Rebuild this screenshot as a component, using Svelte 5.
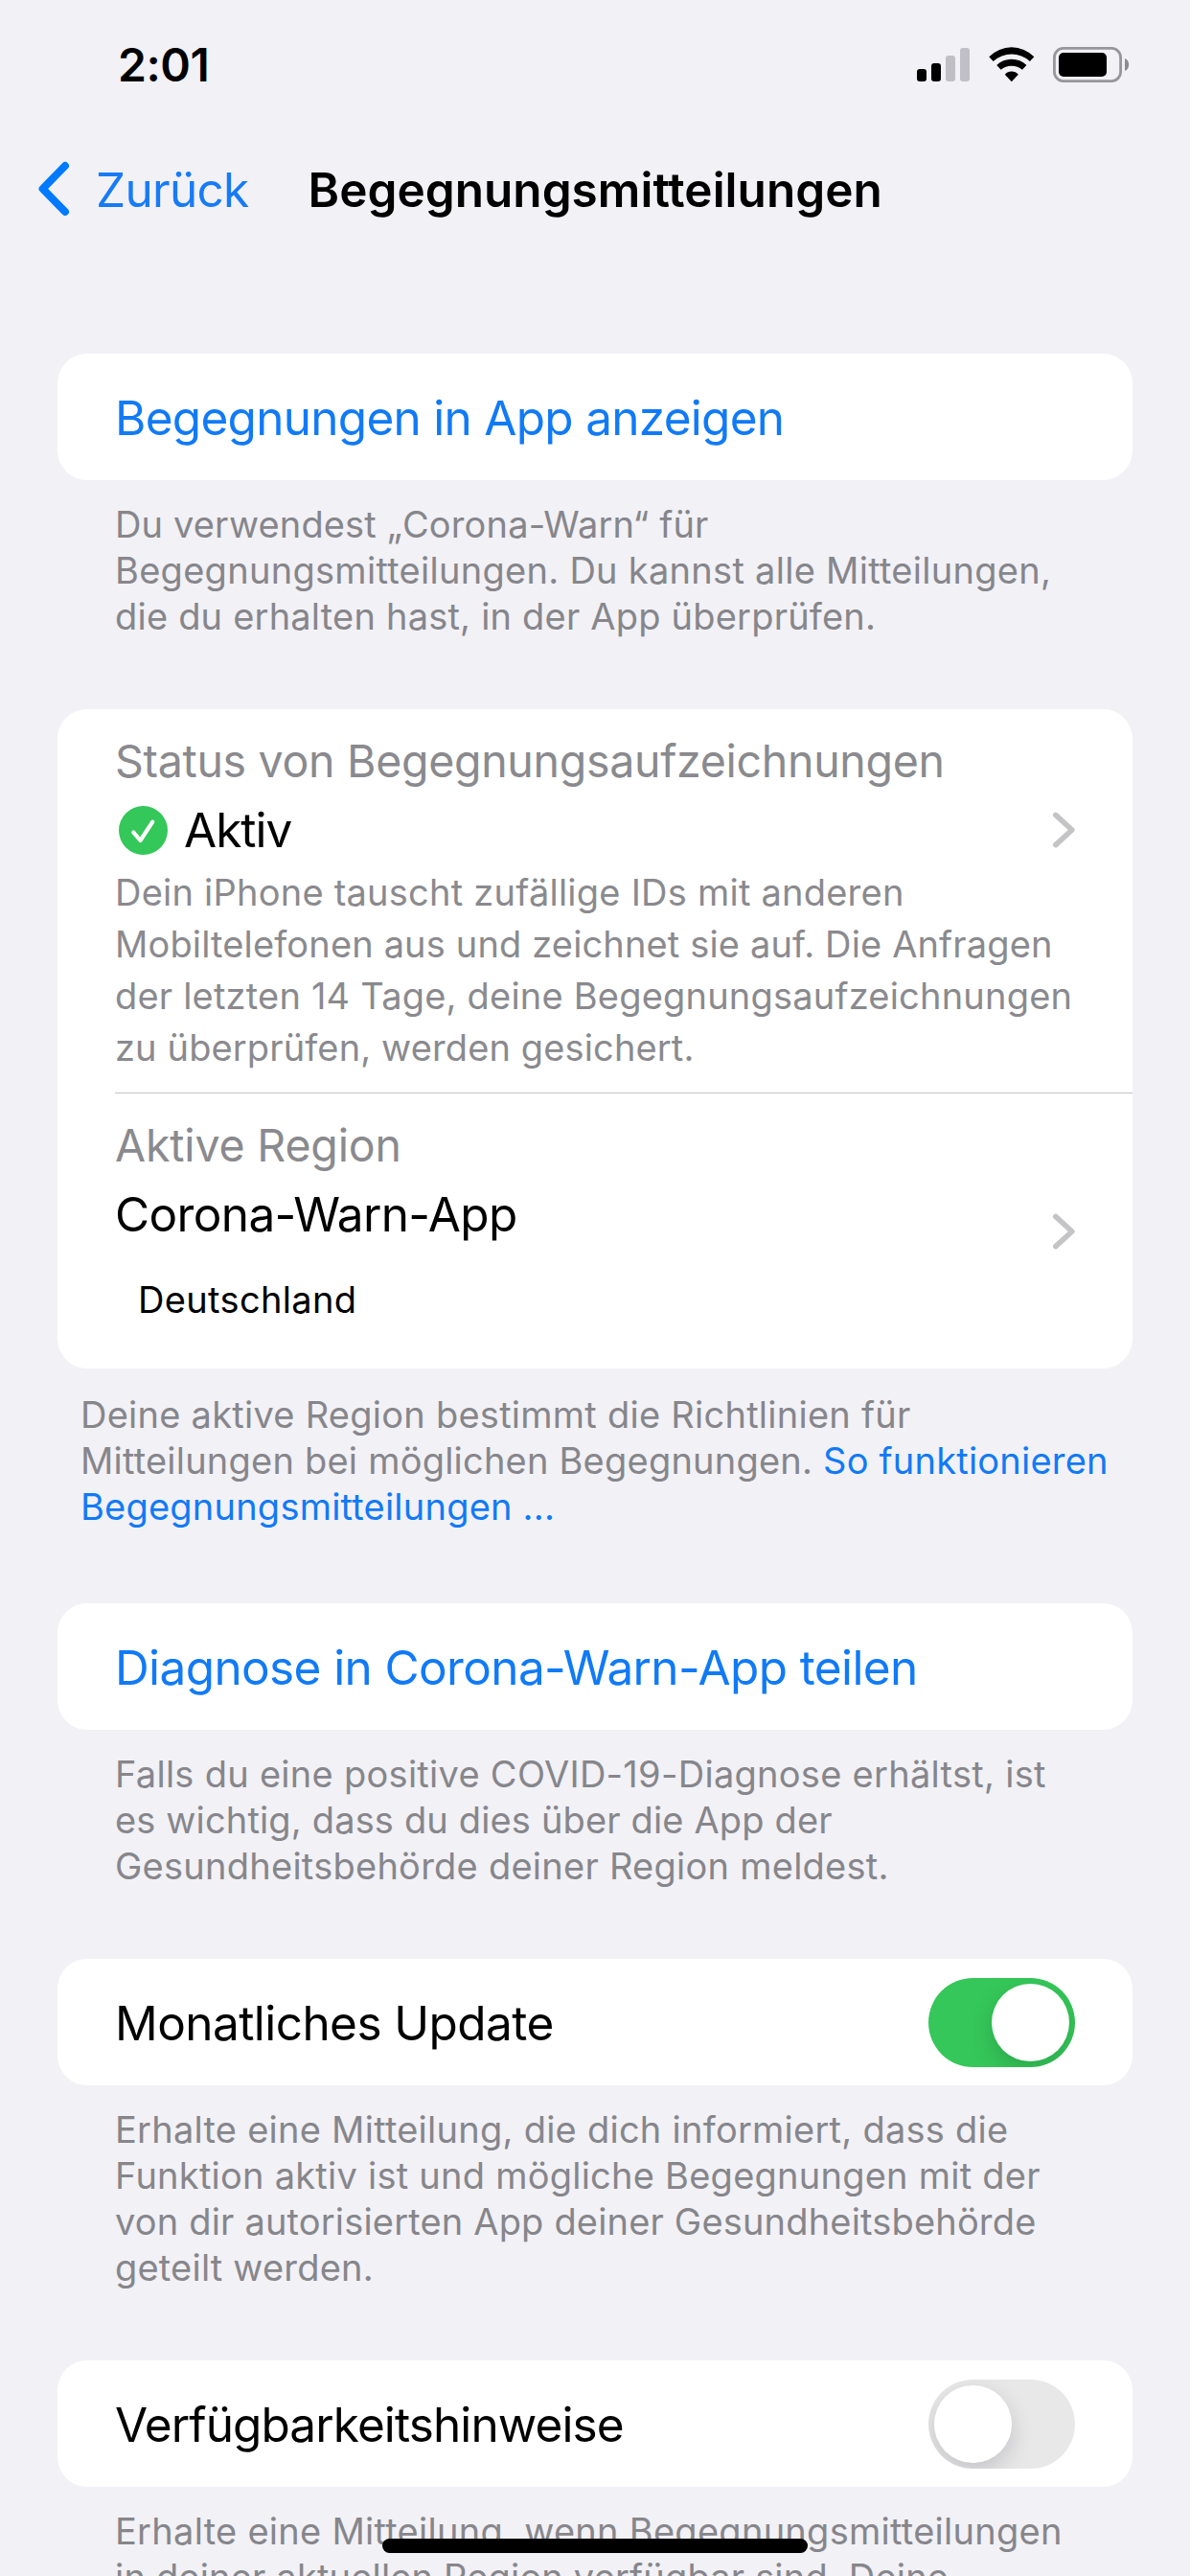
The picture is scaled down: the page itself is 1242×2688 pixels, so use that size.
<script>
  const appNote = [
    ['Du verwendest „Corona-Warn“ für', 0.155],
    ['Begegnungsmitteilungen. Du kannst alle Mitteilungen,', 0.284],
    ['die du erhalten hast, in der App überprüfen.', 0.204]
  ];
  const statusText = [
    ['Dein iPhone tauscht zufällige IDs mit anderen', 0.23],
    ['Mobiltelefonen aus und zeichnet sie auf. Die Anfragen', 0.149],
    ['der letzten 14 Tage, deine Begegnungsaufzeichnungen', 0.2],
    ['zu überprüfen, werden gesichert.', 0.13]
  ];
  const shareNote = [
    ['Falls du eine positive COVID-19-Diagnose erhältst, ist', 0.277],
    ['es wichtig, dass du dies über die App der', 0.15],
    ['Gesundheitsbehörde deiner Region meldest.', 0.252]
  ];
  const updateNote = [
    ['Erhalte eine Mitteilung, die dich informiert, dass die', 0.25],
    ['Funktion aktiv ist und mögliche Begegnungen mit der', 0.24],
    ['von dir autorisierten App deiner Gesundheitsbehörde', 0.175],
    ['geteilt werden.', 0.2]
  ];
  const availabilityNote = [
    ['Erhalte eine Mitteilung, wenn Begegnungsmitteilungen', 0.274],
    ['in deiner aktuellen Region verfügbar sind. Deine', 0.18]
  ];

  let monthly = $state(true);
  let availability = $state(false);
</script>

{#snippet lines(items)}
  {#each items as [text, tracking]}
    <span class="line" style:letter-spacing="{tracking}px">{text}</span>
  {/each}
{/snippet}

{#snippet chevron()}
  <svg class="chevron" width="24" height="38" viewBox="0 0 24 38" aria-hidden="true">
    <path d="M3.8 3.4 L20.8 19 L3.8 34.6" />
  </svg>
{/snippet}

<div class="screen">
  <header>
    <div class="statusbar">
      <span class="time">2:01</span>
      <div class="indicators">
        <svg width="56" height="37" viewBox="0 0 56 37" aria-hidden="true">
          <rect x="0" y="23" width="10" height="13" rx="3" />
          <rect x="15" y="17" width="10" height="19" rx="3" />
          <rect class="dim" x="30" y="9" width="10" height="27" rx="3" />
          <rect class="dim" x="45" y="1" width="10" height="35" rx="3" />
        </svg>
        <svg class="wifi" width="48" height="37" viewBox="0 0 48 37" aria-hidden="true">
          <path d="M0.3 10.2 A33 33 0 0 1 47.3 10.2 L42.9 14.9 A28.5 28.5 0 0 0 4.7 14.9 Z" />
          <path d="M8.2 19 A22.5 22.5 0 0 1 39.4 19 L34.9 23.8 A17 17 0 0 0 12.7 23.8 Z" />
          <path d="M16.8 28.8 A9.3 9.3 0 0 1 30.8 28.8 L23.8 36.2 Z" />
        </svg>
        <svg class="battery" width="80" height="37" viewBox="0 0 80 37" aria-hidden="true">
          <rect class="shell" x="1.4" y="1.4" width="69.2" height="34.2" rx="9.5" />
          <rect x="6" y="6" width="50" height="25" rx="5" />
          <path class="nub" d="M75 12 C80.5 14 80.5 23 75 25 Z" />
        </svg>
      </div>
    </div>
    <nav>
      <svg class="back" width="36" height="60" viewBox="0 0 36 60" aria-hidden="true">
        <path d="M30 6 L6.6 30 L30 54" />
      </svg>
      <span class="backlabel">Zurück</span>
      <h1>Begegnungsmitteilungen</h1>
    </nav>
  </header>

  <main>
    <section>
      <div class="card row"><span class="link show">Begegnungen in App anzeigen</span></div>
      <p class="note">{@render lines(appNote)}</p>
    </section>

    <section class="details">
      <div class="card">
        <div class="status">
          <div class="label">Status von Begegnungsaufzeichnungen</div>
          <div class="active">
            <svg class="check" width="51" height="51" viewBox="0 0 51 51" aria-hidden="true">
              <circle cx="25.5" cy="25.5" r="25.5" />
              <path d="M15.3 27.6 L22.5 36 L35.2 16.6" />
            </svg>
            <span class="activelabel">Aktiv</span>
            {@render chevron()}
          </div>
          <p class="description">{@render lines(statusText)}</p>
        </div>
        <div class="region">
          <div class="regiontext">
            <div class="label regionlabel">Aktive Region</div>
            <div class="appname">Corona-Warn-App</div>
            <div class="country">Deutschland</div>
          </div>
          {@render chevron()}
        </div>
      </div>
      <p class="note wide">
        <span class="line t1">Deine aktive Region bestimmt die Richtlinien für</span>
        <span class="line t2">Mitteilungen bei möglichen Begegnungen. <a>So funktionieren</a></span>
        <span class="line t2"><a>Begegnungsmitteilungen ...</a></span>
      </p>
    </section>

    <section>
      <div class="card row"><span class="link share">Diagnose in Corona-Warn-App teilen</span></div>
      <p class="note">{@render lines(shareNote)}</p>
    </section>

    <section>
      <div class="card row">
        <span class="monthly">Monatliches Update</span>
        <button class="toggle" class:on={monthly} onclick={() => (monthly = !monthly)} aria-label="Monatliches Update"><i></i></button>
      </div>
      <p class="note">{@render lines(updateNote)}</p>
    </section>

    <section>
      <div class="card row">
        <span class="availability">Verfügbarkeitshinweise</span>
        <button class="toggle" class:on={availability} onclick={() => (availability = !availability)} aria-label="Verfügbarkeitshinweise"><i></i></button>
      </div>
      <p class="note">{@render lines(availabilityNote)}</p>
    </section>
  </main>

  <div class="home"></div>
</div>

<style>
  :global(body) { background: #f2f1f6; }
  .screen {
    position: relative;
    width: 1242px;
    height: 2688px;
    overflow: hidden;
    box-sizing: border-box;
    background: #f2f1f6;
    color: #000;
    font-family: Inter, "Liberation Sans", sans-serif;
    font-size: 49.5px;
    line-height: 60px;
  }
  svg { display: block; flex: none; }
  p, h1 { margin: 0; }

  header { height: 369px; }
  .statusbar {
    height: 132px;
    box-sizing: border-box;
    padding: 38px 63px 0 123px;
    display: flex;
    justify-content: space-between;
    align-items: flex-start;
  }
  .time { font-size: 48px; font-weight: 600; letter-spacing: -0.46px; }
  .indicators { display: flex; padding-top: 11px; }
  .dim { fill: #c0bfc5; }
  .wifi { margin-left: 19px; }
  .battery { margin-left: 19px; }
  .shell { fill: none; stroke: #96969b; stroke-width: 2.8; }
  .nub { fill: #8c8c90; }

  nav { display: flex; padding: 36px 0 0 38px; }
  .back { margin-top: -1px; }
  .back path { fill: none; stroke: #007aff; stroke-width: 8; stroke-linecap: round; stroke-linejoin: round; }
  .backlabel { width: 221.5px; margin-left: 26px; color: #177bf6; letter-spacing: -0.7px; }
  h1 { font-size: 49.5px; font-weight: 600; letter-spacing: 0.02px; }

  main { padding: 0 60px; display: flex; flex-direction: column; gap: 73px; }
  .card { background: #fff; border-radius: 31px; }
  .row {
    height: 132px;
    box-sizing: border-box;
    padding: 2px 60px 0;
    display: flex;
    align-items: center;
    justify-content: space-between;
  }
  .link, a { color: #117af6; }
  .show { letter-spacing: -0.72px; }
  .share { letter-spacing: -0.618px; }
  .monthly { letter-spacing: -0.56px; }
  .availability { letter-spacing: -0.9px; }

  .note { padding: 22px 60px 0; font-size: 38px; line-height: 48px; color: #86868b; }
  .wide { padding: 24px 24px 0; }
  .details { padding-bottom: 4px; }
  .line { display: block; white-space: nowrap; }
  .t1 { letter-spacing: 0.253px; }
  .t2 { letter-spacing: 0.215px; }

  .status { margin-left: 60px; padding: 23px 60px 20px 0; border-bottom: 1px solid #c4c4c6; }
  .label { font-size: 46.5px; line-height: 62px; letter-spacing: -0.305px; color: #8a8a8e; }
  .active { margin-top: 6px; height: 70px; padding-left: 4px; display: flex; align-items: center; }
  .check circle { fill: #34c759; }
  .check path { fill: none; stroke: #fff; stroke-width: 4.2; stroke-linecap: round; stroke-linejoin: round; }
  .activelabel { flex: 1; margin-left: 17px; letter-spacing: -1px; }
  .chevron path { fill: none; stroke: #c4c4c6; stroke-width: 5.6; stroke-linecap: round; stroke-linejoin: round; }
  .description { margin-top: 3px; font-size: 38px; line-height: 54px; color: #8a8a8e; }

  .region { display: flex; align-items: center; justify-content: space-between; padding: 0 60px; }
  .regiontext { padding: 23px 0 45px; }
  .regionlabel { letter-spacing: -0.167px; }
  .appname { margin-top: 6px; line-height: 70px; letter-spacing: -0.636px; }
  .country { margin: 27px 0 0 24px; font-size: 38px; line-height: 54px; letter-spacing: 0.35px; }

  .toggle {
    width: 153px;
    height: 93px;
    margin: -1px 0 0;
    padding: 6px;
    box-sizing: border-box;
    border: 0;
    border-radius: 47px;
    overflow: hidden;
    background: #e8e8e9;
    display: flex;
  }
  .toggle i {
    width: 81px;
    height: 81px;
    border-radius: 50%;
    background: #fff;
    box-shadow: 0 9px 24px rgba(0, 0, 20, 0.16);
  }
  .toggle.on { background: #35c759; justify-content: flex-end; }

  .home {
    position: absolute;
    left: 399px;
    top: 2649px;
    width: 444px;
    height: 15px;
    border-radius: 8px;
    background: #000;
  }
</style>
